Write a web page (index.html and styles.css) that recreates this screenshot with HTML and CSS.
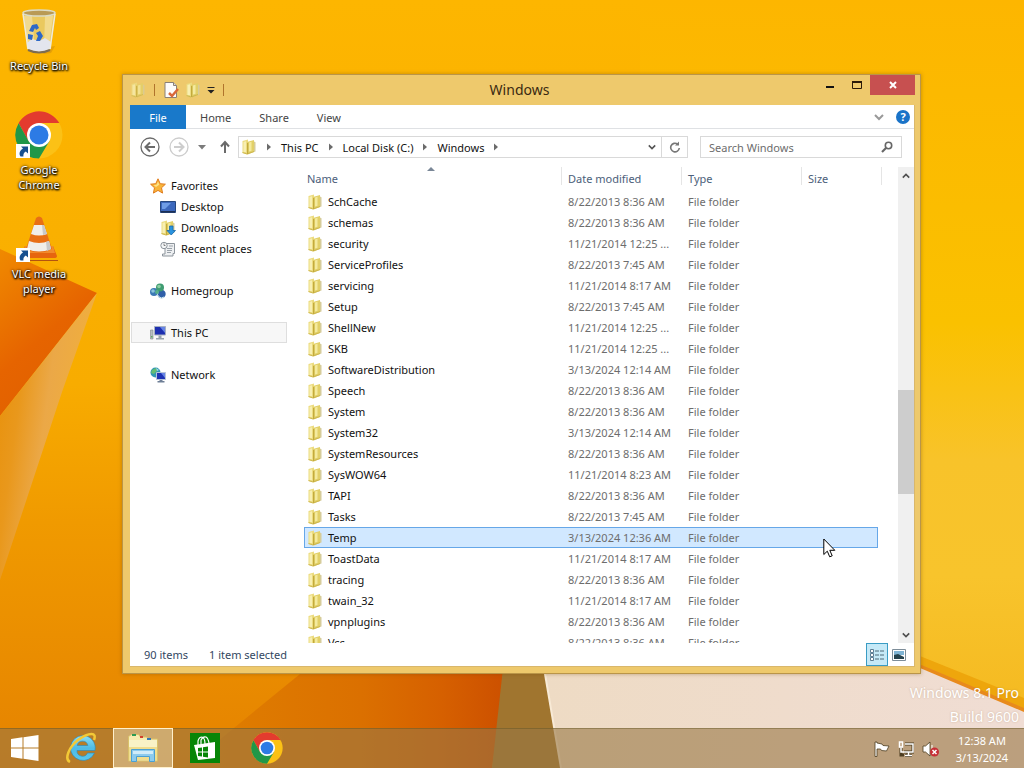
FILE: index.html
```
<!DOCTYPE html>
<html lang="en">
<head>
  <meta charset="UTF-8">
  <title>Windows</title>
  <link rel="stylesheet" href="styles.css">
</head>
<body>
  <!-- wallpaper -->
  <svg class="wallpaper" viewBox="0 0 1024 768" preserveAspectRatio="none" aria-hidden="true">
    <defs>
      <linearGradient id="sky" x1="0" y1="0" x2="0" y2="1">
        <stop offset="0" stop-color="#fdb600"/>
        <stop offset=".5" stop-color="#f8ac00"/>
        <stop offset=".68" stop-color="#f09a00"/>
        <stop offset="1" stop-color="#e58200"/>
      </linearGradient>
      <linearGradient id="right" x1="0" y1="0" x2="0" y2="1">
        <stop offset="0" stop-color="#fdb600"/>
        <stop offset=".12" stop-color="#fcb900"/>
        <stop offset=".42" stop-color="#fac100"/>
        <stop offset=".6" stop-color="#f8c32a"/>
        <stop offset=".75" stop-color="#f8c42c"/>
        <stop offset="1" stop-color="#f3b51c"/>
      </linearGradient>
      <linearGradient id="fold" x1="0" y1="0" x2=".5" y2="1">
        <stop offset="0" stop-color="#f08a00"/>
        <stop offset=".6" stop-color="#e66400"/>
        <stop offset="1" stop-color="#e06000"/>
      </linearGradient>
      <linearGradient id="sliver" x1="0" y1="0" x2="1" y2=".4">
        <stop offset="0" stop-color="#e88f06"/>
        <stop offset=".3" stop-color="#e9981c"/>
        <stop offset=".55" stop-color="#eba847"/>
        <stop offset="1" stop-color="#f2b13a"/>
      </linearGradient>
      <linearGradient id="ember" x1="0" y1="0" x2="1" y2="0">
        <stop offset="0" stop-color="#e08000"/>
        <stop offset=".55" stop-color="#db7000"/>
        <stop offset=".8" stop-color="#d66000"/>
        <stop offset="1" stop-color="#cc5000"/>
      </linearGradient>
      <linearGradient id="sand" x1="0" y1="0" x2="1" y2="0">
        <stop offset="0" stop-color="#eedbc4"/>
        <stop offset="1" stop-color="#f0ddd4"/>
      </linearGradient>
    </defs>
    <path fill="url(#sky)" d="M0 0h1024v768H0z"/>
    <path fill="url(#right)" d="M640 0h384v768H640z"/>
    <path fill="url(#fold)" d="M0 249L97 293L0 416z"/>
    <path fill="url(#sliver)" d="M97 293L0 416V580L62 392z"/>
    <path fill="url(#ember)" d="M300 674h206l-14 94H185z"/>
    <path fill="#a0752f" d="M503 668h42l20 100h-73z"/>
    <path fill="#eea60c" d="M900 648l124 50v14l-124-50z"/>
    <path fill="#e88a1c" d="M900 656l124 52v5l-124-52z"/>
    <path fill="url(#sand)" d="M544 668h376l104 44v56H561z"/>
    <path fill="none" stroke="#f8ead6" stroke-width="2" d="M544 668l17 100"/>
  </svg>

  <!-- shared icons -->
  <svg class="sprite" aria-hidden="true">
    <symbol id="folder" viewBox="0 0 16 16">
      <path fill="#ecdc80" d="M1.500 2L7 .5V15.500L1.500 14z"/>
      <path fill="#f8efb2" d="M2.500 3l2.500-.8V13L2.500 13z"/>
      <path fill="#e2d068" d="M6 3l7-2v12l-7 2.500z"/>
      <path fill="#f4ea9e" d="M8 3.500l2.500-.7v9L8 12.500z"/>
      <path fill="#c3aa3c" d="M6 4h1.200v11.300L6 15z"/>
      <path fill="#d6cc9a" d="M13 2.500l1.500.8v9.200l-1.500.5z"/>
      <path fill="#cdb74e" d="M1.500 13L6 14.500v1L1.500 14zM7 14l6-2v1l-6 2.300z"/>
    </symbol>
    <symbol id="chrome" viewBox="0 0 48 48">
      <circle cx="24" cy="24" r="23.500" fill="#fbc116"/>
      <path fill="#e33b2e" d="M24 12h20.300A23.500 23.500 0 0 0 3.600 12.200L13.500 30z"/>
      <path fill="#219748" d="M3.600 12.200A23.500 23.500 0 0 0 24 47.500L34.500 30 24 34 13.600 30z"/>
      <circle cx="24" cy="24" r="12" fill="#fff"/>
      <circle cx="24" cy="24" r="9.500" fill="#2d7be5"/>
    </symbol>
    <symbol id="shortcut" viewBox="0 0 14 14">
      <path fill="#fff" d="M0 0h14v14H0z"/>
      <path fill="#17508f" d="M5 2.500h7v7L9.800 7.600C7.500 9 7.300 10.500 7.400 12.500H4.500C2.500 9.500 4 6.500 7 4.600z"/>
    </symbol>
    <symbol id="chevron-down" viewBox="0 0 10 10">
      <path fill="none" stroke="currentColor" stroke-width="2" d="M1 3l4 4 4-4"/>
    </symbol>
    <symbol id="crumb" viewBox="0 0 6 10">
      <path fill="#6b6b6b" d="M1 1.500L5 5 1 8.500z"/>
    </symbol>
  </svg>

  <main class="desktop">
    <div class="shortcuts">
      <a class="shortcut" href="#">
        <svg width="48" height="48" viewBox="0 0 48 48">
          <path fill="#cf8c0c" opacity=".5" d="M34 40l6-1-4 7-8 1z"/>
          <path fill="#e6cc70" fill-opacity=".85" d="M8 6h32l-4 36q-12 6-24 0z"/>
          <path fill="#fff" fill-opacity=".3" d="M9 9h8l3 33-7-1z"/>
          <path fill="#fff5d0" fill-opacity=".4" d="M30 9h8l-4 31-5 2z"/>
          <ellipse cx="24" cy="6" rx="16" ry="3" fill="#b99a55" stroke="#dcdcc8" stroke-width="1.500"/>
          <path fill="#e3e5ee" d="M12 36l5-4 7 2 6-3 6 4-1 7q-11 6-22 0z"/>
          <path fill="none" stroke="#eeeadc" stroke-width="1.500" d="M8 7l5 35M40 7l-5 35"/>
          <path fill="none" stroke="#7c6c52" stroke-width="2" d="M13 43q11 5 22 0"/>
          <path fill="#2d68c8" d="M14 24l3-6 5-1 2 4-3 2-1-2-2 4zM13 27l5 1-1 5-4-1zM21 26l4-2 3 5-3 5h-4l2-5z"/>
        </svg>
        <span>Recycle Bin</span>
      </a>
      <a class="shortcut" href="#">
        <svg width="48" height="48" viewBox="0 0 48 48">
          <use href="#chrome"/>
          <use href="#shortcut" y="33" x="1" width="14" height="14"/>
        </svg>
        <span>Google Chrome</span>
      </a>
      <a class="shortcut" href="#">
        <svg width="48" height="48" viewBox="0 0 48 48">
          <path fill="#e6650f" d="M10 31h28l4 10q0 2-3 2H8q-3 0-2-3z"/>
          <path fill="#f28b2b" d="M10 31h28l2 7H8z"/>
          <path fill="#e86f16" d="M21 3q3-3 6 0l10 31q-13 7-26 0z"/>
          <path fill="#f0eeea" d="M19 10h10l3 9q-8 3-16 0zM14 26q10 4 20 0l2 8q-12 5-24 0z"/>
          <path fill="#c9c9c9" d="M27 10h2l3 9-4 1zM31 27l3-1 2 8-4 2z"/>
          <path fill="#b35310" d="M14 45h29v1H14z"/>
          <use href="#shortcut" y="33" x="1" width="14" height="14"/>
        </svg>
        <span>VLC media player</span>
      </a>
    </div>

    <section class="window">
      <header class="titlebar">
        <div class="quick-access">
          <svg width="16" height="16"><use href="#folder" opacity=".75"/></svg>
          <i class="divider"></i>
          <button type="button" aria-label="Properties">
            <svg width="16" height="16" viewBox="0 0 16 16">
              <path fill="#fdfcfb" stroke="#8a8078" d="M2 .5h8.500l3 3v12H2z"/>
              <path fill="#ddd" stroke="#8a8078" d="M10.500.5v3h3"/>
              <path fill="none" stroke="#d9683a" stroke-width="2.500" d="M6 11l3 3 6-7"/>
            </svg>
          </button>
          <button type="button" aria-label="New folder"><svg width="16" height="16"><use href="#folder"/></svg></button>
          <button type="button" aria-label="Customize">
            <svg width="8" height="8" viewBox="0 0 8 8"><path fill="#222" d="M.5 1h7v1h-7zM.5 4h7L4 7.500z"/></svg>
          </button>
          <i class="divider"></i>
        </div>
        <h1>Windows</h1>
        <div class="window-buttons">
          <button type="button" aria-label="Minimize"><svg width="8" height="12"><path fill="#111" d="M0 7h8v2H0z"/></svg></button>
          <button type="button" aria-label="Maximize"><svg width="12" height="12"><path fill="none" stroke="#2a1a08" d="M1.500 2.500h9v7h-9z"/><path fill="#2a1a08" d="M1 2h10v2H1z"/></svg></button>
          <button type="button" class="close" aria-label="Close"><svg width="8" height="8"><path stroke="#fff" stroke-width="2" d="M1 1l6 6M7 1L1 7"/></svg></button>
        </div>
      </header>

      <div class="client">
        <nav class="ribbon">
          <button type="button" class="file">File</button>
          <button type="button">Home</button>
          <button type="button">Share</button>
          <button type="button">View</button>
          <div class="ribbon-tools">
            <button type="button" class="expand" aria-label="Expand the ribbon"><svg width="10" height="10"><use href="#chevron-down"/></svg></button>
            <button type="button" class="help" aria-label="Help">?</button>
          </div>
        </nav>

        <div class="toolbar">
          <button type="button" aria-label="Back">
            <svg width="20" height="20" viewBox="0 0 20 20" fill="none" stroke="#6b6b6b"><circle cx="10" cy="10" r="9" stroke-width="1.300"/><path stroke-width="2" d="M15 10H6M10 5.500L5.500 10l4.500 4.500"/></svg>
          </button>
          <button type="button" aria-label="Forward">
            <svg width="20" height="20" viewBox="0 0 20 20" fill="none" stroke="#cdcdcd"><circle cx="10" cy="10" r="9" stroke-width="1.300"/><path stroke-width="2" d="M5 10h9M10 5.500l4.500 4.500-4.500 4.500"/></svg>
          </button>
          <button type="button" aria-label="Recent locations"><svg width="8" height="5"><path fill="#7b7b7b" d="M0 0h8L4 4.500z"/></svg></button>
          <button type="button" aria-label="Up">
            <svg width="10" height="14" fill="none" stroke="#6b6b6b" stroke-width="2"><path d="M5 13V3M1 6.500L5 2l4 4.500"/></svg>
          </button>
          <div class="address">
            <svg width="16" height="16"><use href="#folder"/></svg>
            <svg class="crumb" width="6" height="10"><use href="#crumb"/></svg>
            <a href="#">This PC</a>
            <svg class="crumb" width="6" height="10"><use href="#crumb"/></svg>
            <a href="#">Local Disk (C:)</a>
            <svg class="crumb" width="6" height="10"><use href="#crumb"/></svg>
            <a href="#">Windows</a>
            <svg class="crumb" width="6" height="10"><use href="#crumb"/></svg>
            <button type="button" class="history" aria-label="Previous locations"><svg width="8" height="8"><use href="#chevron-down"/></svg></button>
            <button type="button" class="refresh" aria-label="Refresh">
              <svg width="12" height="12" viewBox="0 0 12 12"><path fill="none" stroke="#777" stroke-width="1.600" d="M8.500 3A4.300 4.300 0 1 0 10.300 7"/><path fill="#777" d="M6 4.500h4V.5z"/></svg>
            </button>
          </div>
          <div class="search">
            <input type="text" placeholder="Search Windows" aria-label="Search Windows">
            <svg width="12" height="12" fill="none" stroke="#666"><circle cx="7.500" cy="4.500" r="3.200" stroke-width="1.600"/><path stroke-width="2.200" d="M5 7L1 11"/></svg>
          </div>
        </div>

        <div class="content">
          <ul class="sidebar">
            <li><a href="#">
              <svg width="16" height="16" viewBox="0 0 16 16"><path fill="#f8b53a" stroke="#e07b1c" d="M8 .8l2.200 4.900 5.200.5-3.900 3.600 1.100 5.300L8 12.400l-4.600 2.700 1.100-5.300L.6 6.200l5.200-.5z"/><path fill="#fde389" d="M8 3.500l1.300 3.200L6 9 3.500 7l3-.3z"/></svg>
              Favorites</a></li>
            <li class="child"><a href="#">
              <svg width="16" height="16" viewBox="0 0 16 16"><path fill="#3c68bd" stroke="#27487f" d="M.5 2.500h15v11H.5z"/><path fill="#6f9de6" d="M2 4h9l-6 6H2z"/><path fill="#1c2f55" d="M1 12h14v1.500H1z"/></svg>
              Desktop</a></li>
            <li class="child"><a href="#">
              <svg width="16" height="16" viewBox="0 0 16 16"><use href="#folder" width="16" height="16"/><path fill="#2a93df" stroke="#1668ab" stroke-width=".8" d="M9.500 6h3.500v4.500h2.500L11.200 15 7 10.500h2.500z"/></svg>
              Downloads</a></li>
            <li class="child"><a href="#">
              <svg width="16" height="16" viewBox="0 0 16 16"><path fill="#eef0f2" stroke="#8d959c" d="M5 2.500h9.500v10H13v2.500H2.500v-2H5z"/><path stroke="#9aa2a9" d="M9 5h4M7 7.500h5M7 9.500h5M7 11.500h4"/><circle cx="4" cy="4.500" r="3.200" fill="#f5f7f8" stroke="#8d959c"/><path fill="none" stroke="#666" stroke-width=".8" d="M4 2.500v2h1.500"/></svg>
              Recent places</a></li>
            <li class="group"><a href="#">
              <svg width="16" height="16" viewBox="0 0 16 16"><circle cx="4" cy="9" r="4" fill="#3c79b5"/><circle cx="11.500" cy="11" r="4.200" fill="#2f5fa8"/><circle cx="10" cy="4.500" r="4" fill="#3f9c72"/><circle cx="9" cy="3.500" r="1.800" fill="#8fd0a4"/><circle cx="3" cy="8" r="1.800" fill="#8bc4dd"/><path fill="none" stroke="#d2edf0" d="M8 9a4 4 0 0 0 6 5"/><circle cx="7" cy="9" r="2" fill="#56b08b"/></svg>
              Homegroup</a></li>
            <li class="group current"><a href="#">
              <svg width="16" height="16" viewBox="0 0 16 16"><path fill="#b7bfc2" stroke="#7f8a8b" stroke-width=".6" d="M.5 5h2.500v9H.5z"/><path fill="#1d2fb0" stroke="#a6b0c2" d="M4.500 1.500h11v8.500h-11z"/><path fill="#6684e6" d="M10 2h5v6z"/><path fill="#98a3ae" d="M8.500 10.500h3V13h2.500v1.500H6V13h2.500z"/><path fill="#61a760" d="M1 11h1.500v1.500H1z"/></svg>
              This PC</a></li>
            <li class="group"><a href="#">
              <svg width="16" height="16" viewBox="0 0 16 16"><circle cx="5.500" cy="5.500" r="5" fill="#2f97b4"/><path fill="#63bd72" d="M2 3l4-2 1 3-3 3-3-1z"/><path fill="#a5dce9" d="M6 1l3 2-2 1z"/><path fill="#1d33b4" stroke="#b6c4da" d="M6.500 5.500h9v7h-9z"/><path fill="#6684e6" d="M11 6h4v5z"/><path fill="#6e7f96" d="M9.500 13h3v1h2v1.500h-7V14h2z"/></svg>
              Network</a></li>
          </ul>

          <div class="listing">
            <table>
              <thead>
                <tr><th class="name sorted">Name</th><th class="date">Date modified</th><th class="type">Type</th><th>Size</th></tr>
              </thead>
              <tbody>
                <tr><td><svg><use href="#folder"/></svg>SchCache</td><td>8/22/2013 8:36 AM</td><td>File folder</td><td></td></tr>
                <tr><td><svg><use href="#folder"/></svg>schemas</td><td>8/22/2013 8:36 AM</td><td>File folder</td><td></td></tr>
                <tr><td><svg><use href="#folder"/></svg>security</td><td>11/21/2014 12:25 ...</td><td>File folder</td><td></td></tr>
                <tr><td><svg><use href="#folder"/></svg>ServiceProfiles</td><td>8/22/2013 7:45 AM</td><td>File folder</td><td></td></tr>
                <tr><td><svg><use href="#folder"/></svg>servicing</td><td>11/21/2014 8:17 AM</td><td>File folder</td><td></td></tr>
                <tr><td><svg><use href="#folder"/></svg>Setup</td><td>8/22/2013 7:45 AM</td><td>File folder</td><td></td></tr>
                <tr><td><svg><use href="#folder"/></svg>ShellNew</td><td>11/21/2014 12:25 ...</td><td>File folder</td><td></td></tr>
                <tr><td><svg><use href="#folder"/></svg>SKB</td><td>11/21/2014 12:25 ...</td><td>File folder</td><td></td></tr>
                <tr><td><svg><use href="#folder"/></svg>SoftwareDistribution</td><td>3/13/2024 12:14 AM</td><td>File folder</td><td></td></tr>
                <tr><td><svg><use href="#folder"/></svg>Speech</td><td>8/22/2013 8:36 AM</td><td>File folder</td><td></td></tr>
                <tr><td><svg><use href="#folder"/></svg>System</td><td>8/22/2013 8:36 AM</td><td>File folder</td><td></td></tr>
                <tr><td><svg><use href="#folder"/></svg>System32</td><td>3/13/2024 12:14 AM</td><td>File folder</td><td></td></tr>
                <tr><td><svg><use href="#folder"/></svg>SystemResources</td><td>8/22/2013 8:36 AM</td><td>File folder</td><td></td></tr>
                <tr><td><svg><use href="#folder"/></svg>SysWOW64</td><td>11/21/2014 8:23 AM</td><td>File folder</td><td></td></tr>
                <tr><td><svg><use href="#folder"/></svg>TAPI</td><td>8/22/2013 8:36 AM</td><td>File folder</td><td></td></tr>
                <tr><td><svg><use href="#folder"/></svg>Tasks</td><td>8/22/2013 7:45 AM</td><td>File folder</td><td></td></tr>
                <tr class="selected"><td><svg><use href="#folder"/></svg>Temp</td><td>3/13/2024 12:36 AM</td><td>File folder</td><td></td></tr>
                <tr><td><svg><use href="#folder"/></svg>ToastData</td><td>11/21/2014 8:17 AM</td><td>File folder</td><td></td></tr>
                <tr><td><svg><use href="#folder"/></svg>tracing</td><td>8/22/2013 8:36 AM</td><td>File folder</td><td></td></tr>
                <tr><td><svg><use href="#folder"/></svg>twain_32</td><td>11/21/2014 8:17 AM</td><td>File folder</td><td></td></tr>
                <tr><td><svg><use href="#folder"/></svg>vpnplugins</td><td>8/22/2013 8:36 AM</td><td>File folder</td><td></td></tr>
                <tr><td><svg><use href="#folder"/></svg>Vss</td><td>8/22/2013 8:36 AM</td><td>File folder</td><td></td></tr>
              </tbody>
            </table>
          </div>

          <div class="scrollbar">
            <button type="button" class="up" aria-label="Scroll up"><svg width="8" height="8"><use href="#chevron-down"/></svg></button>
            <div class="track"><div class="thumb"></div></div>
            <button type="button" aria-label="Scroll down"><svg width="8" height="8"><use href="#chevron-down"/></svg></button>
          </div>
        </div>

        <footer class="status">
          <span>90 items</span>
          <span>1 item selected</span>
          <div class="views">
            <button type="button" class="active" aria-label="Details">
              <svg width="16" height="14" viewBox="0 0 16 14"><path fill="#fff" stroke="#5f7f94" d="M1.500 1.500h3v3h-3zM1.500 5.500h3v3h-3zM1.500 9.500h3v3h-3z"/><path stroke="#4f6a79" stroke-dasharray="4 1" d="M6 3h10M6 7h10M6 11h10"/></svg>
            </button>
            <button type="button" aria-label="Large icons">
              <svg width="14" height="12" viewBox="0 0 14 12"><path fill="#fff" stroke="#7d8d99" d="M.5.5h13v11H.5z"/><path fill="#7fb4d4" d="M2 2h10v4H2z"/><path fill="#25424d" d="M2 6l4-1 6 3v2H2z"/></svg>
            </button>
          </div>
        </footer>
      </div>
    </section>

    <p class="watermark">Windows 8.1 Pro<br>Build 9600</p>

    <svg class="cursor" width="13" height="20" viewBox="0 0 13 20"><path fill="#fff" stroke="#000" d="M.8 1v15.500l3.500-3.300 2.400 5.600 2.500-1-2.400-5.500h5z"/></svg>
  </main>

  <footer class="taskbar">
    <button type="button" class="start" aria-label="Start">
      <svg width="28" height="26" viewBox="0 0 28 26"><path fill="#fff" d="M0 4l11.500-1.700v10.200H0zM12.500 2.200L27.500 0v12.500h-15zM0 13.500h11.500v10.200L0 22zM12.500 13.500h15V26l-15-2.200z"/></svg>
    </button>
    <button type="button" aria-label="Internet Explorer">
      <svg width="32" height="32" viewBox="0 0 32 32">
        <defs><linearGradient id="ie" x1="0" y1="0" x2="0" y2="1"><stop offset="0" stop-color="#8be0f7"/><stop offset=".5" stop-color="#4fbbe6"/><stop offset="1" stop-color="#59c6ec"/></linearGradient></defs>
        <path fill="url(#ie)" stroke="#2c86b5" stroke-width=".6" d="M17.500 3.500A12.500 12.500 0 1 0 29.500 21H22.500A5.500 5.500 0 0 1 12 18.500H30A12.500 12.500 0 0 0 17.500 3.500zM12.200 13.500A5.400 5.400 0 0 1 22.800 13.500z"/>
        <path fill="none" stroke="#f3c936" stroke-width="2.500" d="M5 30C-1 27 4 15 13 8 21 2 28 .5 29.500 3.500q.5 2-.5 4.500"/>
      </svg>
    </button>
    <button type="button" class="running" aria-label="File Explorer">
      <svg width="32" height="32" viewBox="0 0 32 32">
        <path fill="#f6ecb1" stroke="#d9c16a" d="M1.500 5.500l3-2h7l2 2.500h6l2 2h9V30h-29z"/>
        <path fill="#2c9b52" d="M5 3h4v2H5z"/><path fill="#d2402d" d="M13 5h3v2h-3z"/><path fill="#3579b5" d="M20 7h4v2h-4z"/>
        <path fill="#f0dd8e" d="M2 11h28v18H2z"/><path fill="#f9f2c6" d="M2 9h28v7H2z"/>
        <path fill="#8ccbee" stroke="#4ba0d3" d="M4.500 18.500h23v12h-5v-5h-13v5h-5z"/>
        <path fill="#d0ecf9" d="M6 20h20v3H6z"/>
      </svg>
    </button>
    <button type="button" aria-label="Store">
      <svg width="30" height="30" viewBox="0 0 30 30">
        <path fill="#078507" d="M0 0h30v30H0z"/>
        <path fill="none" stroke="#fff" stroke-width="1.200" d="M8 12V8q1-4 4-4 3 1 3 7M11 11V7q2-4 5-3 2 1 3 6"/>
        <path fill="#fff" d="M4 12l21-3v16L8 27z"/>
        <path fill="#078507" d="M8 15l4-.6v4H8zM13 14.200l5-.8v5h-5zM8 19.500h4v4L8 23zM13 19.500h5v5l-5-.8z"/>
      </svg>
    </button>
    <button type="button" aria-label="Google Chrome"><svg width="32" height="32"><use href="#chrome"/></svg></button>

    <div class="tray">
      <svg width="16" height="16" viewBox="0 0 16 16"><path fill="#fff" stroke="#4b3c20" stroke-width=".8" d="M1 1h2v1l5 1 1 1.500 6 .5-2.500 5-5-.5-1-1.500L3 8v7.500H1z"/></svg>
      <svg width="16" height="16" viewBox="0 0 16 16" fill="none"><path stroke="#4b3c20" stroke-width="3" d="M7 3h8v8H6M10 11v3M7 14.500h7M3 7v7h3"/><path stroke="#fff" stroke-width="1.500" d="M7 3h8v8H6M10.500 11v3M7 14.500h7M3 7v4h3M1.500 1h3v5h-3z"/></svg>
      <svg width="18" height="16" viewBox="0 0 18 16"><path fill="#fff" stroke="#4b3c20" stroke-width=".8" d="M1 5h2.500L8 1v14l-4.500-4H1z"/><path stroke="#fff" d="M10 4v4"/><circle cx="12.500" cy="11" r="4.500" fill="#c62f36"/><path stroke="#fff" stroke-width="1.500" d="M10.500 9l4 4M14.500 9l-4 4"/></svg>
      <time class="clock">12:38 AM<br>3/13/2024</time>
    </div>
  </footer>
</body>
</html>
```
FILE: styles.css
```
* { box-sizing: border-box; }
body { margin: 0; height: 100vh; display: flex; flex-direction: column; overflow: hidden; font: 11px/15px "Noto Sans", "Open Sans", sans-serif; color: #111; background: #f8ac00; }
button { padding: 0; border: none; background: none; font: inherit; color: inherit; display: flex; align-items: center; justify-content: center; }
a { color: inherit; text-decoration: none; }
svg { flex: none; display: block; }
.sprite { position: absolute; width: 0; height: 0; }
.wallpaper { position: absolute; z-index: -1; width: 100%; height: 100%; }

/* desktop */
.desktop { position: relative; flex: 1; min-height: 0; }
.shortcuts { display: flex; flex-direction: column; gap: 22px; width: 78px; padding-top: 7px; }
.shortcut { display: flex; flex-direction: column; align-items: center; gap: 3px; min-height: 82px; padding: 0 6px; text-align: center; color: #fff; text-shadow: 1px 1px 2px #000, 0 1px 2px #000, 0 0 3px #000; }
.shortcut span { margin: 0 -6px; }
.shortcut:nth-child(n+2) span { max-width: 64px; }
.watermark { position: absolute; right: 5px; bottom: -1px; margin: 0; text-align: right; font-size: 14px; line-height: 24px; color: #fff; text-shadow: 0 0 2px rgba(150,110,70,0.4); }
.cursor { position: absolute; left: 823px; top: 538px; }

/* window */
.window { position: absolute; inset: 74px 103px 54px 122px; display: flex; flex-direction: column; padding: 0 5px 6px 7px; background: #eec96c; border: 1px solid #ba9548; box-shadow: 0 0 4px rgba(110,70,0,0.4); }
.titlebar { display: grid; grid-template-columns: 1fr auto 1fr; height: 30px; padding-left: 0; }
.titlebar h1 { margin: 0 6px 0 0; font-size: 14px; font-weight: normal; line-height: 30px; color: #3a2a12; }
.quick-access { display: flex; align-items: center; gap: 8px; }
.quick-access button + button { margin-left: -2px; }
.divider { width: 1px; height: 12px; background: #b0742c; }
.window-buttons { display: flex; justify-content: flex-end; }
.window-buttons button { width: 27px; height: 20px; }
.window-buttons .close { width: 45px; background: #c75050; }

.client { flex: 1; min-height: 0; display: flex; flex-direction: column; background: #fff; border: 1px solid #d9b76b; border-width: 0 1px 1px 0; }
.ribbon { display: flex; height: 24px; border-bottom: 1px solid #dfe1e4; color: #444; }
.ribbon button { padding: 2px 14px 0; }
.ribbon .file { width: 56px; margin-bottom: -1px; padding: 0; background: #1979ca; color: #fff; }
.ribbon-tools { display: flex; align-items: center; gap: 12px; margin-left: auto; padding-right: 4px; color: #999; }
.ribbon-tools button { padding: 0; }
.ribbon-tools .help { width: 14px; height: 14px; border-radius: 50%; background: #1a73c8; color: #fff; font-weight: bold; }

.toolbar { display: flex; align-items: center; padding: 6px 12px 8px 10px; height: 38px; gap: 9px; }
.toolbar > button:nth-child(3) { margin: 0 5px 0 0; }
.address { flex: 1; display: flex; align-items: center; height: 22px; margin-left: -1px; padding-left: 2px; border: 1px solid #d9d9d9; }
.address a { white-space: nowrap; }
.crumb { margin: 0 9px; }
.history { width: 18px; height: 20px; margin-left: auto; color: #555; }
.refresh { width: 26px; height: 20px; border-left: 1px solid #d9d9d9; }
.search { display: flex; align-items: center; width: 202px; height: 22px; margin-left: 3px; padding: 0 8px; border: 1px solid #d9d9d9; }
.search input { flex: 1; min-width: 0; padding: 0; border: none; outline: none; background: none; font: inherit; }
.search input::placeholder { color: #6d6d6d; opacity: 1; }

.content { flex: 1; min-height: 0; display: flex; }
.sidebar { width: 157px; margin: 0; padding: 8px 0 0 1px; list-style: none; }
.sidebar a { display: flex; align-items: center; gap: 5px; height: 21px; padding-left: 18px; border: 1px solid transparent; }
.sidebar .child a { padding-left: 28px; }
.sidebar .group { margin-top: 21px; }
.sidebar .current a { background: #f7f7f7; border-color: #dedede; }

.listing { flex: 1; overflow: hidden; padding: 0 20px 0 17px; }
table { width: 100%; border-collapse: separate; border-spacing: 0; table-layout: fixed; }
th, td { height: 21px; padding: 0 0 0 6px; text-align: left; font-weight: normal; white-space: nowrap; color: #6d6d6d; }
th { position: relative; height: 24px; padding-bottom: 2px; color: #4c607a; }
th:first-child { padding-left: 3px; }
th::after { content: ""; position: absolute; right: 0; top: 0; height: 18px; border-right: 1px solid #e5e5e5; }
th:last-child::after { right: -4px; }
.name { width: 258px; }
.date, .type { width: 120px; }
.sorted::before { content: ""; position: absolute; left: 123px; top: 0; border: 4px solid transparent; border-top: 0; border-bottom-color: #7a8797; }
td:first-child { display: flex; align-items: center; gap: 5px; padding-left: 3px; color: #111; }
td svg { width: 16px; height: 16px; }
.selected { background: #d1e8ff; outline: 1px solid #66a7e8; outline-offset: -1px; }

.scrollbar { display: flex; flex-direction: column; width: 16px; background: #f0f0f0; color: #505050; }
.scrollbar button { height: 17px; }
.scrollbar .up svg { transform: rotate(180deg); }
.track { flex: 1; display: flex; flex-direction: column; }
/* thumb position and size, as shares of the track */
.track::before { content: ""; flex: 206; }
.track::after { content: ""; flex: 132; }
.thumb { flex: 104; background: #cdcdcd; }

.status { display: flex; align-items: center; gap: 21px; height: 23px; padding-left: 14px; color: #33475f; }
.views { display: flex; margin: 0 4px 0 auto; }
.views button { width: 22px; height: 23px; }
.views .active { background: #c5e9f7; border: 1px solid #3a9cc4; }

/* taskbar */
.taskbar { display: flex; height: 40px; gap: 2px; border-top: 1px solid rgba(90,80,30,0.4); background: rgba(152,118,68,0.6); color: #fff; }
.taskbar button { width: 60px; padding-bottom: 2px; }
.taskbar .start { width: 49px; }
.taskbar .running { margin-top: -1px; background: rgba(230,215,180,0.5); border: 1px solid #fff0cc; }
.tray { display: flex; align-items: center; gap: 8px; margin-left: auto; padding-right: 16px; }
.clock { margin-left: 8px; text-align: center; line-height: 17px; }
```
